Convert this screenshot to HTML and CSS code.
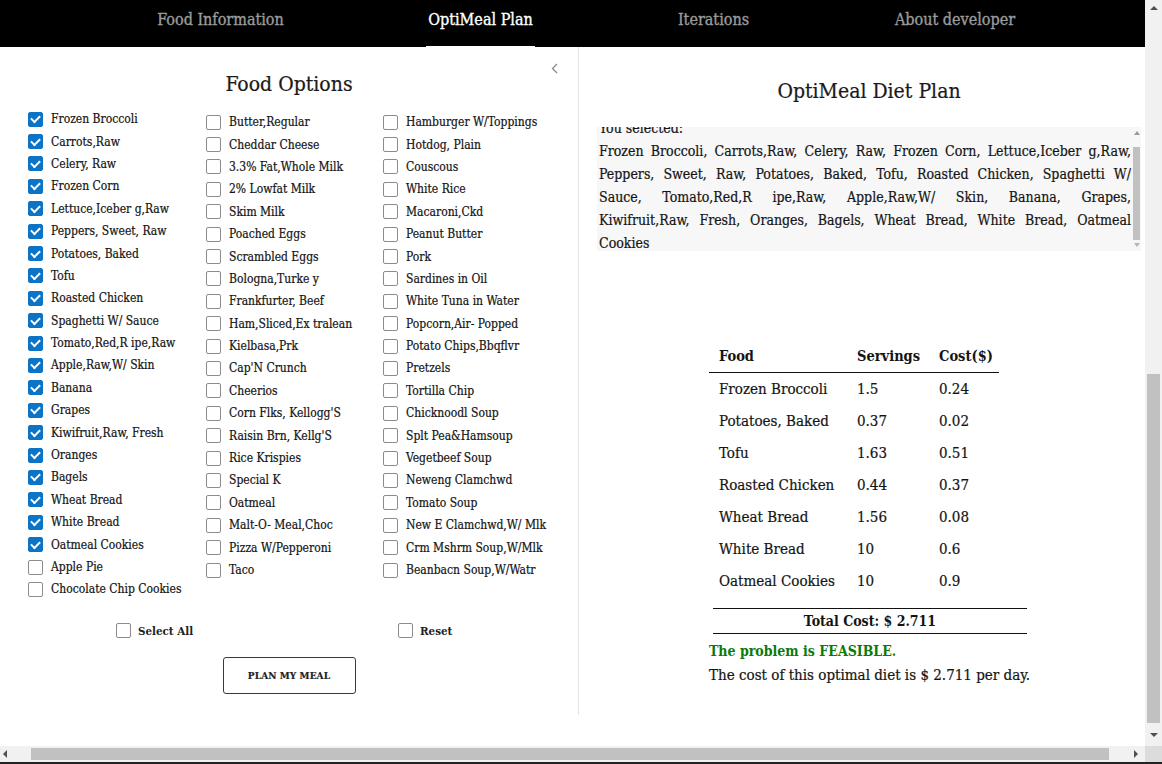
FILE: index.html
```html
<!DOCTYPE html>
<html lang="en">
<head>
<meta charset="utf-8">
<title>OptiMeal Plan</title>
<link rel="stylesheet" href="styles.css">
</head>
<body>
<div class="frame">
  <div class="viewport">
    <nav class="topnav">
      <a class="tab tab-info">Food Information</a>
      <a class="tab tab-plan active">OptiMeal Plan</a>
      <a class="tab tab-iter">Iterations</a>
      <a class="tab tab-dev">About developer</a>
    </nav>
    <main class="main">
      <section class="options">
        <header class="options-head">
          <h2>Food Options</h2>
          <span class="collapse"><svg width="7" height="11" viewBox="0 0 7 11"><path d="M6 1 L1.5 5.5 L6 10" fill="none" stroke="#8a8a8a" stroke-width="1.3"/></svg></span>
        </header>
        <div class="food-grid">
          <ul class="food-col col-a">
            <li class="food"><span class="box on"></span><span>Frozen Broccoli</span></li>
            <li class="food"><span class="box on"></span><span>Carrots,Raw</span></li>
            <li class="food"><span class="box on"></span><span>Celery, Raw</span></li>
            <li class="food"><span class="box on"></span><span>Frozen Corn</span></li>
            <li class="food"><span class="box on"></span><span>Lettuce,Iceber g,Raw</span></li>
            <li class="food"><span class="box on"></span><span>Peppers, Sweet, Raw</span></li>
            <li class="food"><span class="box on"></span><span>Potatoes, Baked</span></li>
            <li class="food"><span class="box on"></span><span>Tofu</span></li>
            <li class="food"><span class="box on"></span><span>Roasted Chicken</span></li>
            <li class="food"><span class="box on"></span><span>Spaghetti W/ Sauce</span></li>
            <li class="food"><span class="box on"></span><span>Tomato,Red,R ipe,Raw</span></li>
            <li class="food"><span class="box on"></span><span>Apple,Raw,W/ Skin</span></li>
            <li class="food"><span class="box on"></span><span>Banana</span></li>
            <li class="food"><span class="box on"></span><span>Grapes</span></li>
            <li class="food"><span class="box on"></span><span>Kiwifruit,Raw, Fresh</span></li>
            <li class="food"><span class="box on"></span><span>Oranges</span></li>
            <li class="food"><span class="box on"></span><span>Bagels</span></li>
            <li class="food"><span class="box on"></span><span>Wheat Bread</span></li>
            <li class="food"><span class="box on"></span><span>White Bread</span></li>
            <li class="food"><span class="box on"></span><span>Oatmeal Cookies</span></li>
            <li class="food"><span class="box"></span><span>Apple Pie</span></li>
            <li class="food"><span class="box"></span><span>Chocolate Chip Cookies</span></li>
          </ul>
          <ul class="food-col col-b">
            <li class="food"><span class="box"></span><span>Butter,Regular</span></li>
            <li class="food"><span class="box"></span><span>Cheddar Cheese</span></li>
            <li class="food"><span class="box"></span><span>3.3% Fat,Whole Milk</span></li>
            <li class="food"><span class="box"></span><span>2% Lowfat Milk</span></li>
            <li class="food"><span class="box"></span><span>Skim Milk</span></li>
            <li class="food"><span class="box"></span><span>Poached Eggs</span></li>
            <li class="food"><span class="box"></span><span>Scrambled Eggs</span></li>
            <li class="food"><span class="box"></span><span>Bologna,Turke y</span></li>
            <li class="food"><span class="box"></span><span>Frankfurter, Beef</span></li>
            <li class="food"><span class="box"></span><span>Ham,Sliced,Ex tralean</span></li>
            <li class="food"><span class="box"></span><span>Kielbasa,Prk</span></li>
            <li class="food"><span class="box"></span><span>Cap'N Crunch</span></li>
            <li class="food"><span class="box"></span><span>Cheerios</span></li>
            <li class="food"><span class="box"></span><span>Corn Flks, Kellogg'S</span></li>
            <li class="food"><span class="box"></span><span>Raisin Brn, Kellg'S</span></li>
            <li class="food"><span class="box"></span><span>Rice Krispies</span></li>
            <li class="food"><span class="box"></span><span>Special K</span></li>
            <li class="food"><span class="box"></span><span>Oatmeal</span></li>
            <li class="food"><span class="box"></span><span>Malt-O- Meal,Choc</span></li>
            <li class="food"><span class="box"></span><span>Pizza W/Pepperoni</span></li>
            <li class="food"><span class="box"></span><span>Taco</span></li>
          </ul>
          <ul class="food-col col-c">
            <li class="food"><span class="box"></span><span>Hamburger W/Toppings</span></li>
            <li class="food"><span class="box"></span><span>Hotdog, Plain</span></li>
            <li class="food"><span class="box"></span><span>Couscous</span></li>
            <li class="food"><span class="box"></span><span>White Rice</span></li>
            <li class="food"><span class="box"></span><span>Macaroni,Ckd</span></li>
            <li class="food"><span class="box"></span><span>Peanut Butter</span></li>
            <li class="food"><span class="box"></span><span>Pork</span></li>
            <li class="food"><span class="box"></span><span>Sardines in Oil</span></li>
            <li class="food"><span class="box"></span><span>White Tuna in Water</span></li>
            <li class="food"><span class="box"></span><span>Popcorn,Air- Popped</span></li>
            <li class="food"><span class="box"></span><span>Potato Chips,Bbqflvr</span></li>
            <li class="food"><span class="box"></span><span>Pretzels</span></li>
            <li class="food"><span class="box"></span><span>Tortilla Chip</span></li>
            <li class="food"><span class="box"></span><span>Chicknoodl Soup</span></li>
            <li class="food"><span class="box"></span><span>Splt Pea&amp;Hamsoup</span></li>
            <li class="food"><span class="box"></span><span>Vegetbeef Soup</span></li>
            <li class="food"><span class="box"></span><span>Neweng Clamchwd</span></li>
            <li class="food"><span class="box"></span><span>Tomato Soup</span></li>
            <li class="food"><span class="box"></span><span>New E Clamchwd,W/ Mlk</span></li>
            <li class="food"><span class="box"></span><span>Crm Mshrm Soup,W/Mlk</span></li>
            <li class="food"><span class="box"></span><span>Beanbacn Soup,W/Watr</span></li>
          </ul>
        </div>
        <div class="controls">
          <label class="ctrl"><span class="box"></span><span>Select All</span></label>
          <label class="ctrl"><span class="box"></span><span>Reset</span></label>
        </div>
        <div class="btn-row"><button class="plan-btn" type="button">PLAN MY MEAL</button></div>
      </section>
      <section class="plan">
        <h2>OptiMeal Diet Plan</h2>
        <div class="selected-box">
          <div class="selected-text">
            <span class="line last">You selected:</span>
            <span class="line">Frozen Broccoli, Carrots,Raw, Celery, Raw, Frozen Corn, Lettuce,Iceber g,Raw,</span>
            <span class="line">Peppers, Sweet, Raw, Potatoes, Baked, Tofu, Roasted Chicken, Spaghetti W/</span>
            <span class="line">Sauce, Tomato,Red,R ipe,Raw, Apple,Raw,W/ Skin, Banana, Grapes,</span>
            <span class="line">Kiwifruit,Raw, Fresh, Oranges, Bagels, Wheat Bread, White Bread, Oatmeal</span>
            <span class="line last">Cookies</span>
          </div>
          <div class="mini-scroll">
            <span class="mini-up"></span>
            <span class="mini-thumb"></span>
            <span class="mini-down"></span>
          </div>
        </div>
        <div class="result">
          <table class="plan-table">
            <thead>
              <tr><th class="c-food">Food</th><th class="c-serv">Servings</th><th class="c-cost">Cost($)</th></tr>
            </thead>
            <tbody>
              <tr><td>Frozen Broccoli</td><td>1.5</td><td>0.24</td></tr>
              <tr><td>Potatoes, Baked</td><td>0.37</td><td>0.02</td></tr>
              <tr><td>Tofu</td><td>1.63</td><td>0.51</td></tr>
              <tr><td>Roasted Chicken</td><td>0.44</td><td>0.37</td></tr>
              <tr><td>Wheat Bread</td><td>1.56</td><td>0.08</td></tr>
              <tr><td>White Bread</td><td>10</td><td>0.6</td></tr>
              <tr><td>Oatmeal Cookies</td><td>10</td><td>0.9</td></tr>
            </tbody>
          </table>
          <div class="total">Total Cost: $ 2.711</div>
          <p class="feasible">The problem is FEASIBLE.</p>
          <p class="cost">The cost of this optimal diet is $ 2.711 per day.</p>
        </div>
      </section>
    </main>
  </div>
  <div class="vscroll">
    <span class="arrow-up"></span>
    <span class="v-thumb"></span>
    <span class="arrow-down"></span>
  </div>
  <div class="hscroll">
    <span class="arrow-left"></span>
    <span class="h-thumb"></span>
    <span class="arrow-right"></span>
  </div>
  <div class="corner"></div>
</div>
<div class="bottom-strip"></div>
</body>
</html>
```

FILE: styles.css
```css
* { box-sizing: border-box; }
html, body { margin: 0; padding: 0; }
body {
  width: 1162px;
  height: 764px;
  overflow: hidden;
  background: #fff;
  color: #141414;
  font-family: "DejaVu Serif Condensed", "DejaVu Serif", serif;
  font-stretch: condensed;
  -webkit-text-stroke: 0.2px currentColor;
}

.frame {
  display: grid;
  grid-template-columns: 1145px 17px;
  grid-template-rows: 746px 16px;
}
.viewport { overflow: hidden; background: #fff; }

/* top navigation */
.topnav {
  display: flex;
  height: 47px;
  background: #000;
  padding-left: 154px;
  gap: 139px;
}
.tab {
  height: 47px;
  line-height: 40px;
  text-align: center;
  color: #9b9b9b;
  font-size: 16px;
  white-space: nowrap;
  text-decoration: none;
  -webkit-text-stroke: 0.35px currentColor;
}
.tab-info { width: 133px; }
.tab-plan { width: 109px; }
.tab-iter { width: 79px; }
.tab-dev { width: 126px; }
.tab.active { color: #fff; border-bottom: 1px solid #fff; }

.main { display: flex; align-items: stretch; }

/* left panel */
.options {
  width: 579px;
  border-right: 1px solid #e4e4e4;
  padding: 16px 0 21px;
}
.options-head {
  display: grid;
  grid-template-columns: 1fr auto 1fr;
}
.options-head h2 {
  grid-column: 2;
  margin: 7px 0 0;
  font-size: 21px;
  line-height: 28px;
  font-weight: normal;
  color: #1a1a1a;
}
.collapse {
  grid-column: 3;
  justify-self: end;
  margin-right: 20px;
  width: 7px;
  height: 11px;
  display: flex;
}

.food-grid {
  display: grid;
  grid-template-columns: 178px 177px 1fr;
  padding-left: 28px;
  margin-top: 10px;
}
.food-col { list-style: none; margin: 0; padding: 0; }
.col-b, .col-c { margin-top: 3px; }
.food {
  display: flex;
  align-items: center;
  gap: 8px;
  height: 22.4px;
  font-size: 12px;
  white-space: nowrap;
}
.box {
  flex: none;
  width: 15px;
  height: 15px;
  border: 1px solid #8c8c8c;
  border-radius: 2px;
  background: #fff;
  display: flex;
  align-items: center;
  justify-content: center;
}
.box.on { background: #0b74c6; border-color: #0b74c6; }
.box.on::after {
  content: "";
  width: 7px;
  height: 4px;
  border-left: 2px solid #fff;
  border-bottom: 2px solid #fff;
  transform: translateY(-1px) rotate(-45deg);
}

.controls {
  display: grid;
  grid-template-columns: 282px auto;
  padding-left: 116px;
  margin-top: 19px;
}
.ctrl {
  display: flex;
  align-items: center;
  gap: 7px;
  height: 22px;
  font-size: 11.5px;
  font-weight: bold;
  color: #222;
  -webkit-text-stroke: 0;
}
.btn-row { display: flex; justify-content: center; margin-top: 15px; }
.plan-btn {
  width: 133px;
  height: 37px;
  border: 1px solid #3a3a3a;
  border-radius: 3px;
  background: #fff;
  font-family: inherit;
  font-stretch: condensed;
  font-size: 10px;
  font-weight: bold;
  color: #222;
  letter-spacing: 0.1px;
  padding: 0;
}

/* right panel */
.plan { flex: 1; padding: 0 4px 0 18px; }
.plan h2 {
  margin: 30px 0 0;
  text-align: center;
  font-size: 21px;
  line-height: 28px;
  font-weight: normal;
  color: #1a1a1a;
}
.selected-box {
  margin-top: 22px;
  height: 124px;
  background: #f7f7f7;
  display: flex;
  overflow: hidden;
}
.selected-text {
  flex: 1;
  align-self: flex-start;
  margin-top: -10px;
  padding: 0 1px 0 2px;
  font-size: 14px;
  line-height: 23px;
}
.line { display: block; text-align: justify; text-align-last: justify; }
.line.last { text-align-last: left; }

.mini-scroll {
  width: 9px;
  display: flex;
  flex-direction: column;
  align-items: center;
}
.mini-up {
  margin-top: 4px;
  width: 0; height: 0;
  border-left: 3px solid transparent;
  border-right: 3px solid transparent;
  border-bottom: 4px solid #9a9a9a;
}
.mini-thumb { width: 7px; height: 93px; margin-top: 12px; background: #c1c1c1; }
.mini-down {
  margin-top: 3px;
  width: 0; height: 0;
  border-left: 3px solid transparent;
  border-right: 3px solid transparent;
  border-top: 4px solid #b5b5b5;
}

.result { width: 320px; margin: 90px auto 0; }
.plan-table { width: 290px; border-collapse: separate; border-spacing: 0; font-size: 15px; }
.plan-table th {
  height: 32px;
  padding: 0 0 2px 10px;
  text-align: left;
  font-weight: bold;
  font-size: 14.5px;
  border-bottom: 1px solid #111;
  -webkit-text-stroke: 0;
}
.plan-table td { height: 32px; padding: 0 0 0 10px; }
.c-food { width: 138px; }
.c-serv { width: 82px; }
.c-cost { width: 70px; }

.total {
  margin: 11px 2px 0 4px;
  border-top: 1px solid #111;
  border-bottom: 1px solid #111;
  text-align: center;
  font-weight: bold;
  font-size: 14px;
  line-height: 24px;
  -webkit-text-stroke: 0;
}
.feasible {
  margin: 6px 0 0;
  color: #0a7a0a;
  font-weight: bold;
  font-size: 14px;
  line-height: 22px;
  -webkit-text-stroke: 0;
}
.cost { margin: 1px 0 0; font-size: 15px; line-height: 24px; white-space: nowrap; }

/* page scrollbars */
.vscroll {
  background: #f1f1f1;
  display: flex;
  flex-direction: column;
  align-items: center;
}
.arrow-up {
  margin-top: 6px;
  width: 0; height: 0;
  border-left: 4px solid transparent;
  border-right: 4px solid transparent;
  border-bottom: 4px solid #505050;
}
.v-thumb { width: 13px; height: 349px; margin-top: 364px; background: #c1c1c1; }
.arrow-down {
  margin-top: 10px;
  width: 0; height: 0;
  border-left: 4px solid transparent;
  border-right: 4px solid transparent;
  border-top: 4px solid #505050;
}
.hscroll { background: #f1f1f1; display: flex; align-items: center; }
.arrow-left {
  margin-left: 3px;
  width: 0; height: 0;
  border-top: 4px solid transparent;
  border-bottom: 4px solid transparent;
  border-right: 4px solid #505050;
}
.h-thumb { margin-left: 24px; width: 1078px; height: 12px; background: #c1c1c1; }
.arrow-right {
  margin-left: 25px;
  width: 0; height: 0;
  border-top: 4px solid transparent;
  border-bottom: 4px solid transparent;
  border-left: 4px solid #505050;
}
.corner { background: #dcdcdc; }
.bottom-strip { height: 2px; background: #222; }
```
